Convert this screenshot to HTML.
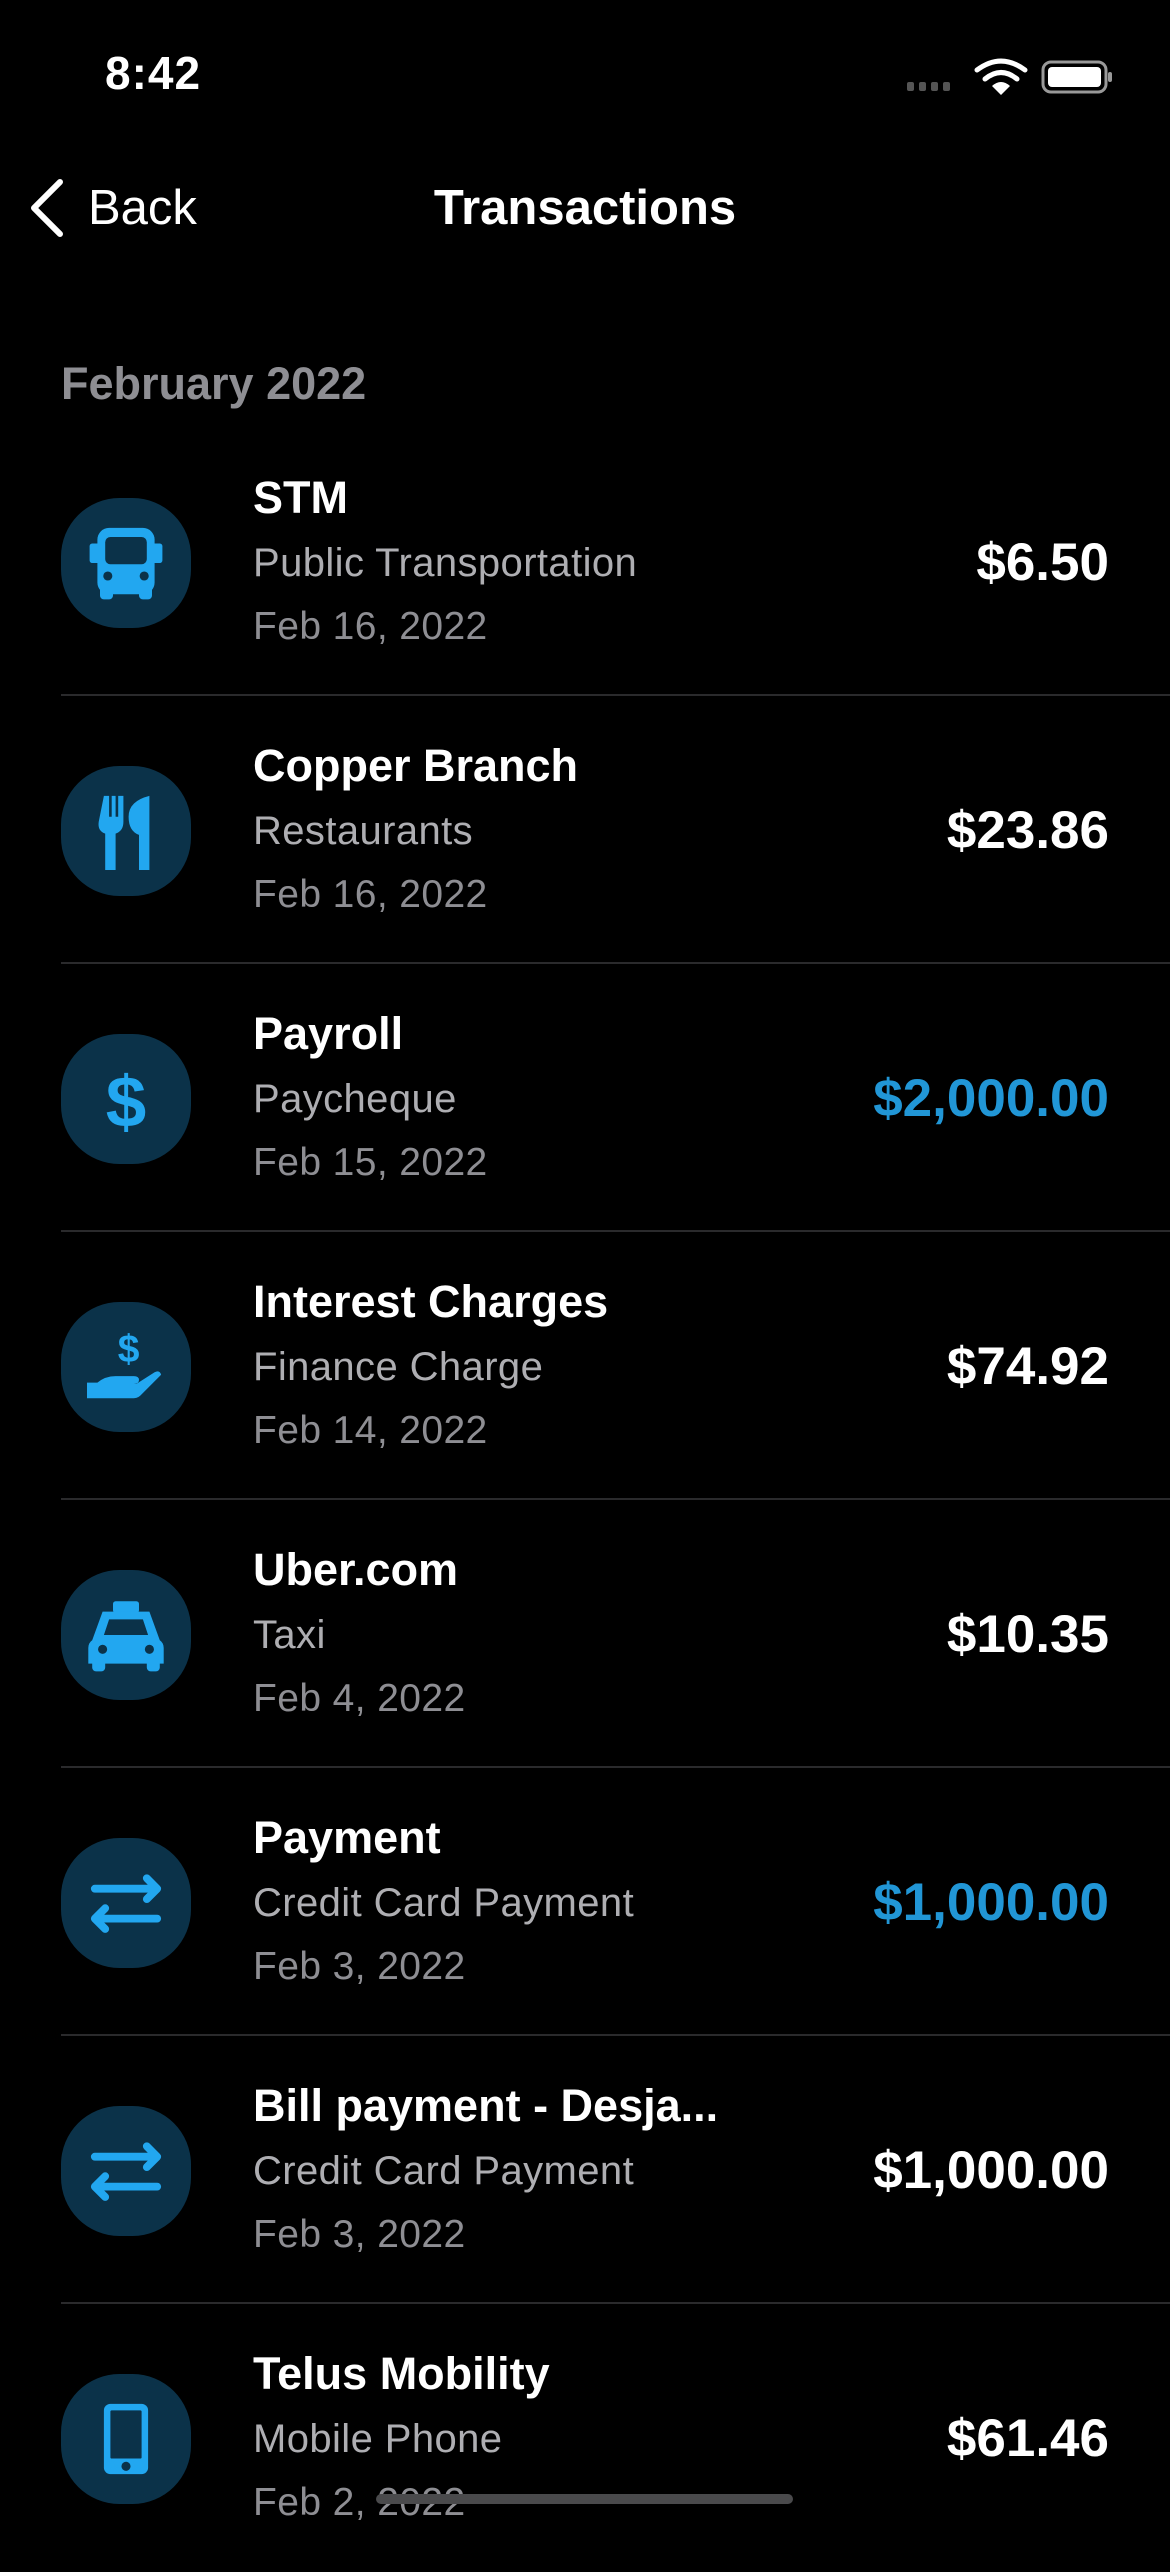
<!DOCTYPE html>
<html><head><meta charset="utf-8">
<style>
*{margin:0;padding:0;box-sizing:border-box}
body{width:1170px;height:2532px;background:#000;overflow:hidden;position:relative;font-family:"Liberation Sans",Arial,sans-serif;color:#fff}
.abs{position:absolute;white-space:nowrap}
.time{left:105px;top:46px;font-size:46px;font-weight:bold;letter-spacing:1px}
.back{left:88px;top:180px;font-size:49px}
.title{left:0;width:1170px;text-align:center;top:180px;font-size:49px;font-weight:bold}
.month{left:61px;top:358px;font-size:45px;font-weight:bold;color:#8e8e93}
.row{position:absolute;left:0;width:1170px;height:268px}
.icon{position:absolute;left:61px;top:70px;width:130px;height:130px;background:#0b3249;border-radius:45%}
.icon svg{width:130px;height:130px}
.t1{position:absolute;left:253px;top:44px;font-size:45px;font-weight:bold;white-space:nowrap}
.t2{position:absolute;left:253px;top:113px;font-size:40px;color:#aeaeb2;white-space:nowrap;letter-spacing:0.4px}
.t3{position:absolute;left:253px;top:177px;font-size:39px;color:#8e8e93;white-space:nowrap;letter-spacing:0.4px}
.amt{position:absolute;right:61px;top:104px;font-size:53px;font-weight:bold;white-space:nowrap}
.blue{color:#2196d6}
.sep{position:absolute;left:61px;right:0;bottom:0;height:2px;background:#2a2a2c}
</style></head><body>
<div class="abs time">8:42</div>
<svg class="abs" style="left:905px;top:58px" width="210" height="40" viewBox="0 0 210 40">
<g fill="#555"><rect x="2" y="24" width="7" height="9" rx="2"/><rect x="14" y="24" width="7" height="9" rx="2"/><rect x="26" y="24" width="7" height="9" rx="2"/><rect x="38" y="24" width="7" height="9" rx="2"/></g>
<g fill="none" stroke="#fff" stroke-width="5" stroke-linecap="round"><path d="M72 12 Q96 -6 120 12"/><path d="M80 21 Q96 8 112 21"/></g>
<path d="M96 37 L87 28 Q96 20 105 28 Z" fill="#fff"/>
<rect x="138" y="4" width="63" height="30" rx="8" fill="none" stroke="#999" stroke-width="3"/>
<rect x="143" y="9" width="53" height="20" rx="4" fill="#fff"/>
<rect x="203" y="14" width="4" height="10" rx="2" fill="#999"/>
</svg>
<svg class="abs" style="left:26px;top:178px" width="40" height="60" viewBox="0 0 40 60"><path d="M34 4 L8 30 L34 56" fill="none" stroke="#fff" stroke-width="6" stroke-linecap="round" stroke-linejoin="round"/></svg>
<div class="abs back">Back</div>
<div class="abs title">Transactions</div>
<div class="abs month">February 2022</div>

<div class="row" style="top:428px">
<div class="icon"><svg viewBox="0 0 100 100"><g fill="#22a7f0"><rect x="28" y="23" width="44" height="51" rx="9"/><rect x="22" y="35" width="8" height="15" rx="2"/><rect x="70" y="35" width="8" height="15" rx="2"/><rect x="30" y="66" width="10" height="12" rx="3"/><rect x="60" y="66" width="10" height="12" rx="3"/></g><rect x="34" y="30" width="32" height="21" rx="4" fill="#0b3249"/><circle cx="36" cy="60" r="3.5" fill="#0b3249"/><circle cx="64" cy="60" r="3.5" fill="#0b3249"/></svg></div>
<div class="t1">STM</div><div class="t2">Public Transportation</div><div class="t3">Feb 16, 2022</div>
<div class="amt">$6.50</div><div class="sep"></div></div>

<div class="row" style="top:696px">
<div class="icon"><svg viewBox="0 0 100 100"><g fill="#22a7f0"><path d="M33 23 h4 v16 h2 v-16 h3 v16 h2 v-16 h4 v20 q0 7 -6 9 v28 h-8 v-28 q-6 -2 -5 -9 z"/><path d="M68 23 v57 h-8 v-27 q-8 -3 -8 -14 q0 -12 16 -16 z"/></g></svg></div>
<div class="t1">Copper Branch</div><div class="t2">Restaurants</div><div class="t3">Feb 16, 2022</div>
<div class="amt">$23.86</div><div class="sep"></div></div>

<div class="row" style="top:964px">
<div class="icon"><svg viewBox="0 0 100 100"><text x="50" y="71" text-anchor="middle" font-family="Liberation Sans" font-weight="bold" font-size="56" fill="#22a7f0">$</text></svg></div>
<div class="t1">Payroll</div><div class="t2">Paycheque</div><div class="t3">Feb 15, 2022</div>
<div class="amt blue">$2,000.00</div><div class="sep"></div></div>

<div class="row" style="top:1232px">
<div class="icon"><svg viewBox="0 0 100 100"><text x="52" y="46" text-anchor="middle" font-family="Liberation Sans" font-weight="bold" font-size="30" fill="#22a7f0">$</text><path d="M20 62 h8 q6 -5 14 -5 h14 q4 0 4 3 q0 3 -4 3 h-10 h12 l14 -9 q4 -2 5 2 l-16 16 q-2 2 -5 2 h-36 z" fill="#22a7f0"/></svg></div>
<div class="t1">Interest Charges</div><div class="t2">Finance Charge</div><div class="t3">Feb 14, 2022</div>
<div class="amt">$74.92</div><div class="sep"></div></div>

<div class="row" style="top:1500px">
<div class="icon"><svg viewBox="0 0 100 100"><g fill="#22a7f0"><rect x="40" y="24" width="20" height="9" rx="2"/><path d="M32 32 h36 l8 22 q3 2 3 6 v12 h-58 v-12 q0 -4 3 -6 z"/><rect x="24" y="68" width="10" height="10" rx="3"/><rect x="66" y="68" width="10" height="10" rx="3"/></g><path d="M37 38 h26 l4 12 h-34 z" fill="#0b3249"/><circle cx="32" cy="61" r="3.5" fill="#0b3249"/><circle cx="68" cy="61" r="3.5" fill="#0b3249"/></svg></div>
<div class="t1">Uber.com</div><div class="t2">Taxi</div><div class="t3">Feb 4, 2022</div>
<div class="amt">$10.35</div><div class="sep"></div></div>

<div class="row" style="top:1768px">
<div class="icon"><svg viewBox="0 0 100 100"><g fill="none" stroke="#22a7f0" stroke-width="6" stroke-linecap="round" stroke-linejoin="round"><path d="M26 39 h48 M66 31 l8 8 l-8 8"/><path d="M74 62 h-48 M34 54 l-8 8 l8 8"/></g></svg></div>
<div class="t1">Payment</div><div class="t2">Credit Card Payment</div><div class="t3">Feb 3, 2022</div>
<div class="amt blue">$1,000.00</div><div class="sep"></div></div>

<div class="row" style="top:2036px">
<div class="icon"><svg viewBox="0 0 100 100"><g fill="none" stroke="#22a7f0" stroke-width="6" stroke-linecap="round" stroke-linejoin="round"><path d="M26 39 h48 M66 31 l8 8 l-8 8"/><path d="M74 62 h-48 M34 54 l-8 8 l8 8"/></g></svg></div>
<div class="t1">Bill payment - Desja...</div><div class="t2">Credit Card Payment</div><div class="t3">Feb 3, 2022</div>
<div class="amt">$1,000.00</div><div class="sep"></div></div>

<div class="row" style="top:2304px">
<div class="icon"><svg viewBox="0 0 100 100"><rect x="33" y="23" width="34" height="54" rx="5" fill="#22a7f0"/><rect x="38" y="28" width="24" height="37" rx="1" fill="#0b3249"/><circle cx="50" cy="71" r="3.5" fill="#0b3249"/></svg></div>
<div class="t1">Telus Mobility</div><div class="t2">Mobile Phone</div><div class="t3">Feb 2, 2022</div>
<div class="amt">$61.46</div></div>

<div class="abs" style="left:376px;top:2494px;width:417px;height:10px;border-radius:5px;background:#4a4a4c"></div>
</body></html>
